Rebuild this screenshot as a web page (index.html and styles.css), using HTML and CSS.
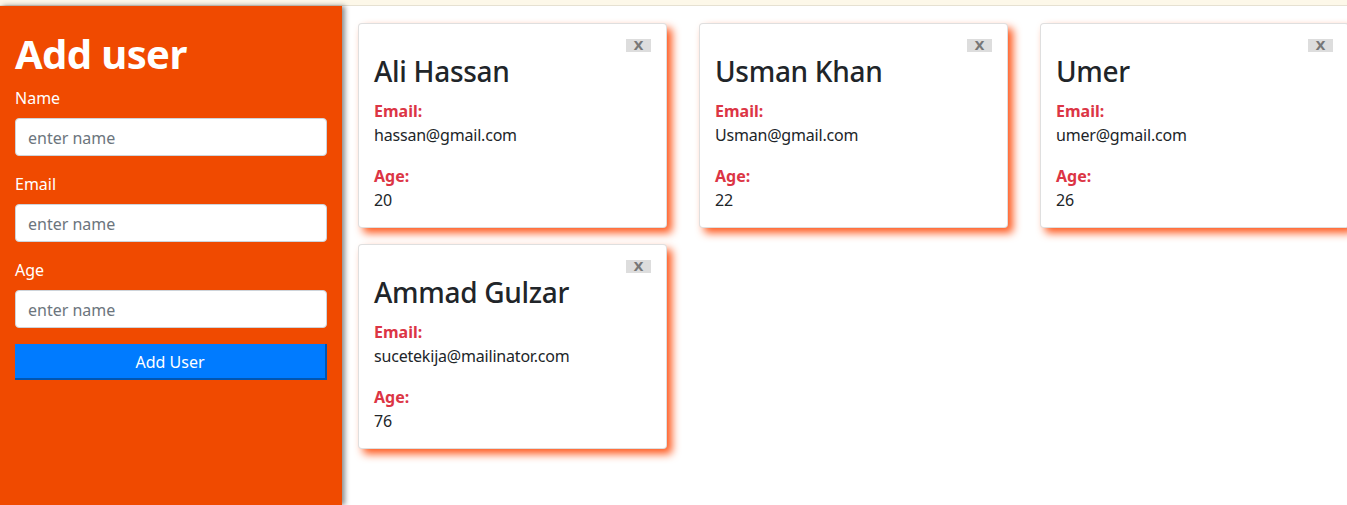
FILE: index.html
```html
<!DOCTYPE html>
<html lang="en">
<head>
<meta charset="utf-8">
<title>Users</title>
<link rel="stylesheet" href="styles.css">
</head>
<body>
<div class="topbar"></div>
<div class="layout">
  <aside class="sidebar">
    <h1 class="title">Add user</h1>
    <div class="form-group">
      <label class="label">Name</label>
      <input class="input" type="text" placeholder="enter name">
    </div>
    <div class="form-group">
      <label class="label">Email</label>
      <input class="input" type="text" placeholder="enter name">
    </div>
    <div class="form-group">
      <label class="label">Age</label>
      <input class="input" type="text" placeholder="enter name">
    </div>
    <button class="submit">Add User</button>
  </aside>
  <main class="cards">
    <div class="card">
      <div class="card-top"><button class="close">X</button></div>
      <h3 class="name">Ali Hassan</h3>
      <div class="field"><div class="field-label">Email:</div><div class="field-value">hassan@gmail.com</div></div>
      <div class="field"><div class="field-label">Age:</div><div class="field-value">20</div></div>
    </div>
    <div class="card">
      <div class="card-top"><button class="close">X</button></div>
      <h3 class="name">Usman Khan</h3>
      <div class="field"><div class="field-label">Email:</div><div class="field-value">Usman@gmail.com</div></div>
      <div class="field"><div class="field-label">Age:</div><div class="field-value">22</div></div>
    </div>
    <div class="card">
      <div class="card-top"><button class="close">X</button></div>
      <h3 class="name">Umer</h3>
      <div class="field"><div class="field-label">Email:</div><div class="field-value">umer@gmail.com</div></div>
      <div class="field"><div class="field-label">Age:</div><div class="field-value">26</div></div>
    </div>
    <div class="card">
      <div class="card-top"><button class="close">X</button></div>
      <h3 class="name">Ammad Gulzar</h3>
      <div class="field"><div class="field-label">Email:</div><div class="field-value">sucetekija@mailinator.com</div></div>
      <div class="field"><div class="field-label">Age:</div><div class="field-value">76</div></div>
    </div>
  </main>
</div>
</body>
</html>
```
FILE: styles.css
```css
* { box-sizing: border-box; }
html, body {
  margin: 0;
  padding: 0;
  height: 100%;
  overflow: hidden;
  background: #fff;
  font-family: "Noto Sans", "Open Sans", sans-serif;
  font-size: 16px;
  line-height: 1.5;
  color: #212529;
}
.topbar {
  height: 6px;
  background: #fdf8e9;
  border-bottom: 1px solid #e6e1d2;
}
.layout {
  display: flex;
  height: calc(100% - 6px);
}
.sidebar {
  flex: 0 0 342px;
  background: #f04a00;
  padding: 24px 15px 0;
  box-shadow: 3px 0 5px rgba(0, 0, 0, 0.45);
  position: relative;
  z-index: 1;
}
.title {
  margin: 0 0 8px;
  font-size: 40px;
  line-height: 48px;
  font-weight: 700;
  letter-spacing: -0.6px;
  color: #fff;
}
.form-group { margin-bottom: 16px; }
.label {
  display: block;
  color: #fff;
  margin-bottom: 8px;
  line-height: 24px;
}
.input {
  display: block;
  width: 100%;
  height: 38px;
  padding: 7px 12px 5px;
  font: inherit;
  color: #495057;
  border: 1px solid #ced4da;
  border-radius: 4px;
  background: #fff;
}
.input::placeholder { color: #6c757d; }
.submit {
  display: block;
  width: 100%;
  height: 36px;
  font: inherit;
  color: #fff;
  background: #007bff;
  border: none;
  border-right: 2px solid #0056b3;
  border-bottom: 2px solid #0056b3;
  padding: 2px 0 0;
}
.cards {
  flex: 1;
  display: grid;
  grid-template-columns: repeat(3, 309px);
  grid-auto-rows: max-content;
  column-gap: 32px;
  row-gap: 16px;
  padding: 17px 0 0 16px;
  align-content: start;
}
.card {
  background: #fff;
  border: 1px solid rgba(0, 0, 0, 0.125);
  border-radius: 4px;
  padding: 15px;
  box-shadow: 5px 5px 9px #ff5a1f;
}
.card-top {
  display: flex;
  justify-content: flex-end;
}
.close {
  width: 25px;
  height: 13px;
  padding: 0;
  border: none;
  background: #dddddd;
  color: #777;
  font-family: "DejaVu Sans", sans-serif;
  font-weight: 700;
  font-size: 13px;
  line-height: 13px;
}
.name {
  margin: 2px 0 11px;
  font-size: 28px;
  line-height: 34px;
  font-weight: 500;
  letter-spacing: -0.3px;
}
.field { margin-bottom: 17px; }
.field:last-child { margin-bottom: 0; }
.field-label {
  color: #dc3545;
  font-weight: 700;
  line-height: 24px;
}
.field-value { line-height: 24px; letter-spacing: -0.2px; }
```
